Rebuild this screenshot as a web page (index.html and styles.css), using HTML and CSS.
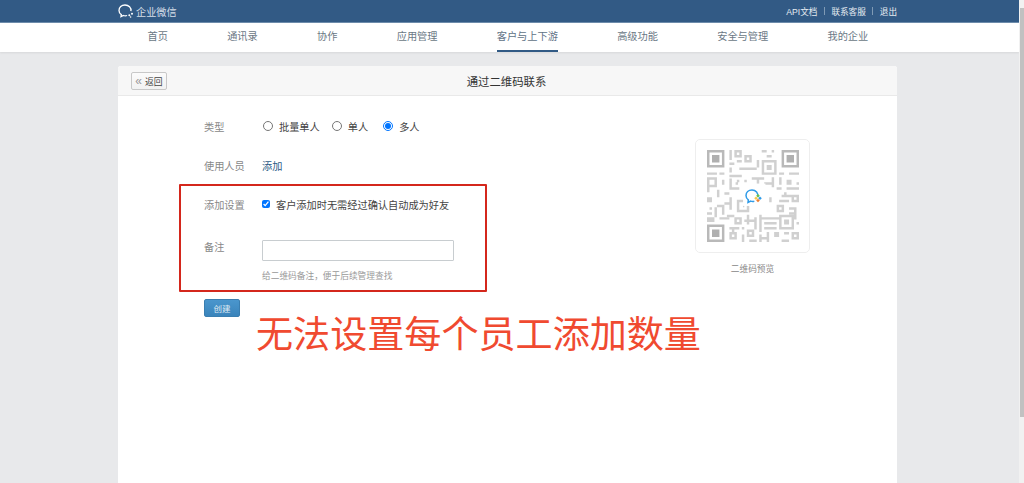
FILE: index.html
```html
<!DOCTYPE html>
<html lang="zh-CN">
<head>
<meta charset="utf-8">
<title>企业微信</title>
<link rel="stylesheet" href="styles.css">
</head>
<body>
<div class="page">
  <header class="topbar">
    <div class="brand">
      <svg class="brand-icon" viewBox="0 0 16 14" aria-hidden="true">
        <path class="brand-line" d="M12.9 7.2C13.6 3.6 10.6 1 7 1 3.5 1 1 3.4 1 6.4c0 1.900 1 3.300 2.300 4.200L3 12.700l2.400-1.200c1.200.4 2.600.4 3.700 0"/>
        <circle class="brand-dot" cx="11.300" cy="11.200" r="1"/>
        <circle class="brand-dot" cx="14" cy="9.800" r="1"/>
        <circle class="brand-dot" cx="12.600" cy="13" r=".8"/>
      </svg>
      <span>企业微信</span>
    </div>
    <nav class="toplinks">
      <a>API文档</a><i class="sep"></i><a>联系客服</a><i class="sep"></i><a>退出</a>
    </nav>
  </header>

  <nav class="mainnav">
    <a class="navitem">首页</a>
    <a class="navitem">通讯录</a>
    <a class="navitem">协作</a>
    <a class="navitem">应用管理</a>
    <a class="navitem navitem-active">客户与上下游</a>
    <a class="navitem">高级功能</a>
    <a class="navitem">安全与管理</a>
    <a class="navitem">我的企业</a>
  </nav>

  <main class="content">
    <section class="card">
      <div class="cardhead">
        <button class="backbtn" type="button"><span class="chev">«</span>返回</button>
        <h1 class="cardtitle">通过二维码联系</h1>
      </div>
      <div class="cardbody">
        <form class="form">
          <div class="row row-type">
            <span class="label">类型</span>
            <div class="radios">
              <label class="opt"><input type="radio" name="t">批量单人</label>
              <label class="opt"><input type="radio" name="t">单人</label>
              <label class="opt opt-last"><input type="radio" name="t" checked>多人</label>
            </div>
          </div>
          <div class="row row-users">
            <span class="label">使用人员</span>
            <a class="link">添加</a>
          </div>
          <div class="redbox">
            <div class="row row-setting">
              <span class="label">添加设置</span>
              <label class="check"><input type="checkbox" checked>客户添加时无需经过确认自动成为好友</label>
            </div>
            <div class="row row-note">
              <span class="label label-note">备注</span>
              <div class="notefield">
                <input class="textinput" type="text">
                <p class="help">给二维码备注，便于后续管理查找</p>
              </div>
            </div>
          </div>
          <button class="createbtn" type="button">创建</button>
        </form>
        <aside class="preview">
          <div class="qrbox">
            <svg class="qr" viewBox="0 0 37 37" aria-label="二维码">
              <path class="qr-finder" d="M0 0h7v7H0zM1 1v5h5V1zM30 0h7v7h-7zM31 1v5h5V1zM0 30h7v7H0zM1 31v5h5v-5z"/>
              <path class="qr-core" d="M2 2h3v3H2zM32 2h3v3h-3zM2 32h3v3H2z"/>
              <path class="qr-mod" d="M9.500 0v4M11.500.5h2v2h-2zM15.500 2.500h2v2h-2zM22 .5h2M26 .5h1M24 2.500h2M9 5.500h2M12 4.500h2M20.500 4v3M22.500 4.500h5v5h-5zM24.500 6.500h1v1h-1zM13 7.500h7M9.500 7v2M9 10.500h5M0 9.500h4M5 9.500h2M29 9.500h2M33 9.500h4"/>
              <path class="qr-mod" d="M.5 11.500h3v3h-3zM.5 15v2M6.500 12v2M9.500 11.500v4M12 12.500h1M15.500 12v1M18 11.500h5M20.500 12v2M23 13.500h3M26.500 11v4M29.500 11v3M32.500 12.500h1v1h-1zM36 13.500h1M32 15.500h5M28 15.500h2M9 15.500h4M11.500 13.500h1M17 15.500h5M7 17.500h2M.5 19.500h1v1h-1zM4.500 16v3"/>
              <path class="qr-mod" d="M30 18.500h4M29 20.500h4M34.500 18.500h2v2h-2zM12.500 20.500h4v4h-4zM14.500 22.500h.5M28.500 22.500h2v2h-2zM33 23.500h3M35.500 24v4M1 23.500h1M4 22.500h3M3.500 23v4M0 25.500h2M6.500 23v3M8 26.500h3M9.500 19v5M7 21.500h2M25.500 19v2M33 25.500h2M31.500 17v1"/>
              <path class="qr-mod" d="M.5 27.500h2v1h-2zM5 27.500h4M11.500 27.500h2v2h-2zM15 28.500h4M16.500 26v4M19.500 27v5M22 27.500h7M23 29.500h5M23 31.500h5M21.500 26v7M29.500 26.500h5v5h-5zM31.500 28.500h1v1h-1zM36 29.500h1"/>
              <path class="qr-mod" d="M9 31.500h4M10.500 32v1M9.500 33.500h2v2h-2zM14 31.500h1M16.500 32.500h2v2h-2zM14.500 34v3M17 36.500h3M22 35.500h2M24.500 33v4M27.500 33.500h1v1h-1zM31 33.500h2M30 36.500h3M34.500 33.500h2v2h-2zM21.500 34v3"/>
              <rect class="qr-clear" x="14.500" y="13.500" width="9" height="9"/>
            </svg>
            <svg class="qr-logo" viewBox="0 0 20 16" aria-hidden="true">
              <path class="qr-bubble" d="M12.700 8.200C13.700 4 10.700 1 7 1 3.500 1 1 3.400 1 6.600c0 1.900 1 3.400 2.300 4.300L3 13.500l2.700-1.400c1.200.4 2.500.4 3.600.1"/>
              <path class="qr-green" d="M13 5l1.800 1.800L13 8.600 11.200 6.800z"/>
              <path class="qr-yellow" d="M11 7.500l1.800 1.800L11 11.100 9.200 9.300z"/>
              <path class="qr-orange" d="M13 9.700l1.800 1.800L13 13.300l-1.800-1.800z"/>
              <path class="qr-blue" d="M15 7.500l1.800 1.800L15 11.100l-1.800-1.800z"/>
            </svg>
          </div>
          <p class="qrcaption">二维码预览</p>
        </aside>
      </div>
      <p class="annotation">无法设置每个员工添加数量</p>
    </section>
  </main>
</div>
<div class="scrollbar"><div class="thumb"></div></div>
</body>
</html>
```
FILE: styles.css
```css
* { box-sizing: border-box; }
html, body { height: 100%; margin: 0; }
body {
  display: flex;
  overflow: hidden;
  background: #e8e9eb;
  font-family: "Liberation Sans", "Noto Sans CJK SC", sans-serif;
  font-size: 10.2px;
  color: #444;
}
a { text-decoration: none; color: inherit; }
p, h1 { margin: 0; font-weight: 400; }

.page { flex: 1; min-width: 0; display: flex; flex-direction: column; }

.scrollbar { width: 5px; background: #f1f1f1; padding: 8px 0 0 1px; }
.thumb { height: 409px; background: #c1c1c1; }

.topbar {
  height: 23px;
  flex: none;
  display: flex;
  align-items: center;
  justify-content: space-between;
  padding: 0 122px 0 118px;
  background: #325a85;
  border-bottom: 1px solid #6e8dac;
  color: #e6ecf2;
}
.brand { display: flex; align-items: center; gap: 2px; color: #d5dee8; }
.brand-icon { width: 16px; height: 14px; }
.brand-line { fill: none; stroke: #fff; stroke-width: 1.3; }
.brand-dot { fill: #fff; }
.toplinks { display: flex; align-items: center; font-size: 8.6px; }
.sep { width: 1px; height: 8px; margin: 0 6.5px; background: #7f9ab5; }

.mainnav {
  height: 29px;
  flex: none;
  display: flex;
  gap: 59.3px;
  padding-left: 147.5px;
  background: #fff;
  box-shadow: 0 1px 2px rgba(0, 0, 0, .08);
  color: #6b7885;
}
.navitem { line-height: 28px; white-space: nowrap; }
.navitem-active { height: 27px; color: #5f7286; box-shadow: 0 2px 0 #315a85; }

.content { flex: 1; min-height: 0; padding: 14px 122px 0 118px; }
.card {
  position: relative;
  height: 100%;
  background: #fff;
  border-radius: 3px 3px 0 0;
  overflow: hidden;
}
.cardhead {
  position: relative;
  height: 30px;
  display: flex;
  align-items: center;
  justify-content: center;
  padding-right: 2px;
  background: #f7f7f7;
  border-bottom: 1px solid #e9e9e9;
}
.backbtn {
  position: absolute;
  left: 13px;
  top: 6px;
  width: 36px;
  height: 18px;
  padding: 0;
  background: linear-gradient(#fbfbfb, #f2f2f2);
  border: 1px solid #c8c8c8;
  border-radius: 2px;
  font: 8.8px "Liberation Sans", "Noto Sans CJK SC", sans-serif;
  color: #444;
}
.chev { margin-right: 3px; color: #999; font-size: 12px; line-height: 10px; }
.cardtitle { font-size: 11.4px; color: #333; }

.cardbody { display: flex; justify-content: space-between; padding: 0 87px 0 86px; }
.form { width: 370px; padding-top: 20px; display: flex; flex-direction: column; align-items: flex-start; }
.row { display: flex; align-items: center; }
.label { width: 58px; flex: none; color: #888; }
.row-type { height: 20px; margin-bottom: 19px; }
.row-users { height: 20px; margin-bottom: 9px; }
.radios { display: flex; gap: 11px; }
.opt, .check { display: flex; align-items: center; color: #444; }
.opt input { width: 10px; height: 10px; margin: 0 6px 0 1px; }
.opt-last { margin-left: 3px; }
.check input { width: 8px; height: 8px; margin: 0 6px 0 0; }
.link { color: #2b5a85; }

.redbox {
  width: 308px;
  height: 108px;
  margin-left: -25px;
  padding: 8px 0 0 23px;
  border: 2px solid #d4271c;
  border-radius: 1px;
}
.row-setting { height: 20px; margin-bottom: 25px; }
.row-note { align-items: flex-start; }
.label-note { line-height: 18px; }
.notefield { display: flex; flex-direction: column; }
.textinput {
  width: 192px;
  height: 21px;
  margin: 1px 0 0;
  background: #fff;
  border: 1px solid #c8cdd0;
  border-radius: 1px;
}
.help { margin-top: 8px; font-size: 8.7px; color: #999; }

.createbtn {
  width: 36px;
  height: 18px;
  margin-top: 7px;
  padding: 0;
  background: linear-gradient(#4a96cd, #3a84bb);
  border: 1px solid #3a7eb0;
  border-radius: 2px;
  font: 8.5px "Liberation Sans", "Noto Sans CJK SC", sans-serif;
  color: #dfeaf3;
}

.preview { width: 115px; padding-top: 43px; }
.qrbox {
  position: relative;
  width: 115px;
  height: 114px;
  display: flex;
  align-items: center;
  justify-content: center;
  background: #fff;
  border: 1px solid #eee;
  border-radius: 5px;
}
.qr { width: 92px; height: 92px; }
.qr-finder { fill: #b9b9b9; fill-rule: evenodd; }
.qr-core { fill: #b0b0b0; }
.qr-mod { fill: none; stroke: #d0d0d0; stroke-width: 1; }
.qr-clear { fill: #fff; }
.qr-logo { position: absolute; left: 49px; top: 49px; width: 20px; height: 16px; }
.qr-bubble { fill: none; stroke: #2f9be8; stroke-width: 1.5; }
.qr-green { fill: #6cc24a; }
.qr-yellow { fill: #f7c948; }
.qr-orange { fill: #ee7d31; }
.qr-blue { fill: #2f9be8; }
.qrcaption { margin-top: 9px; text-align: center; font-size: 8.7px; color: #888; }

.annotation {
  position: absolute;
  left: 138px;
  top: 241px;
  font-family: "Noto Sans CJK SC", sans-serif;
  font-size: 37.1px;
  line-height: 50px;
  white-space: nowrap;
  color: #f04a30;
}
```
